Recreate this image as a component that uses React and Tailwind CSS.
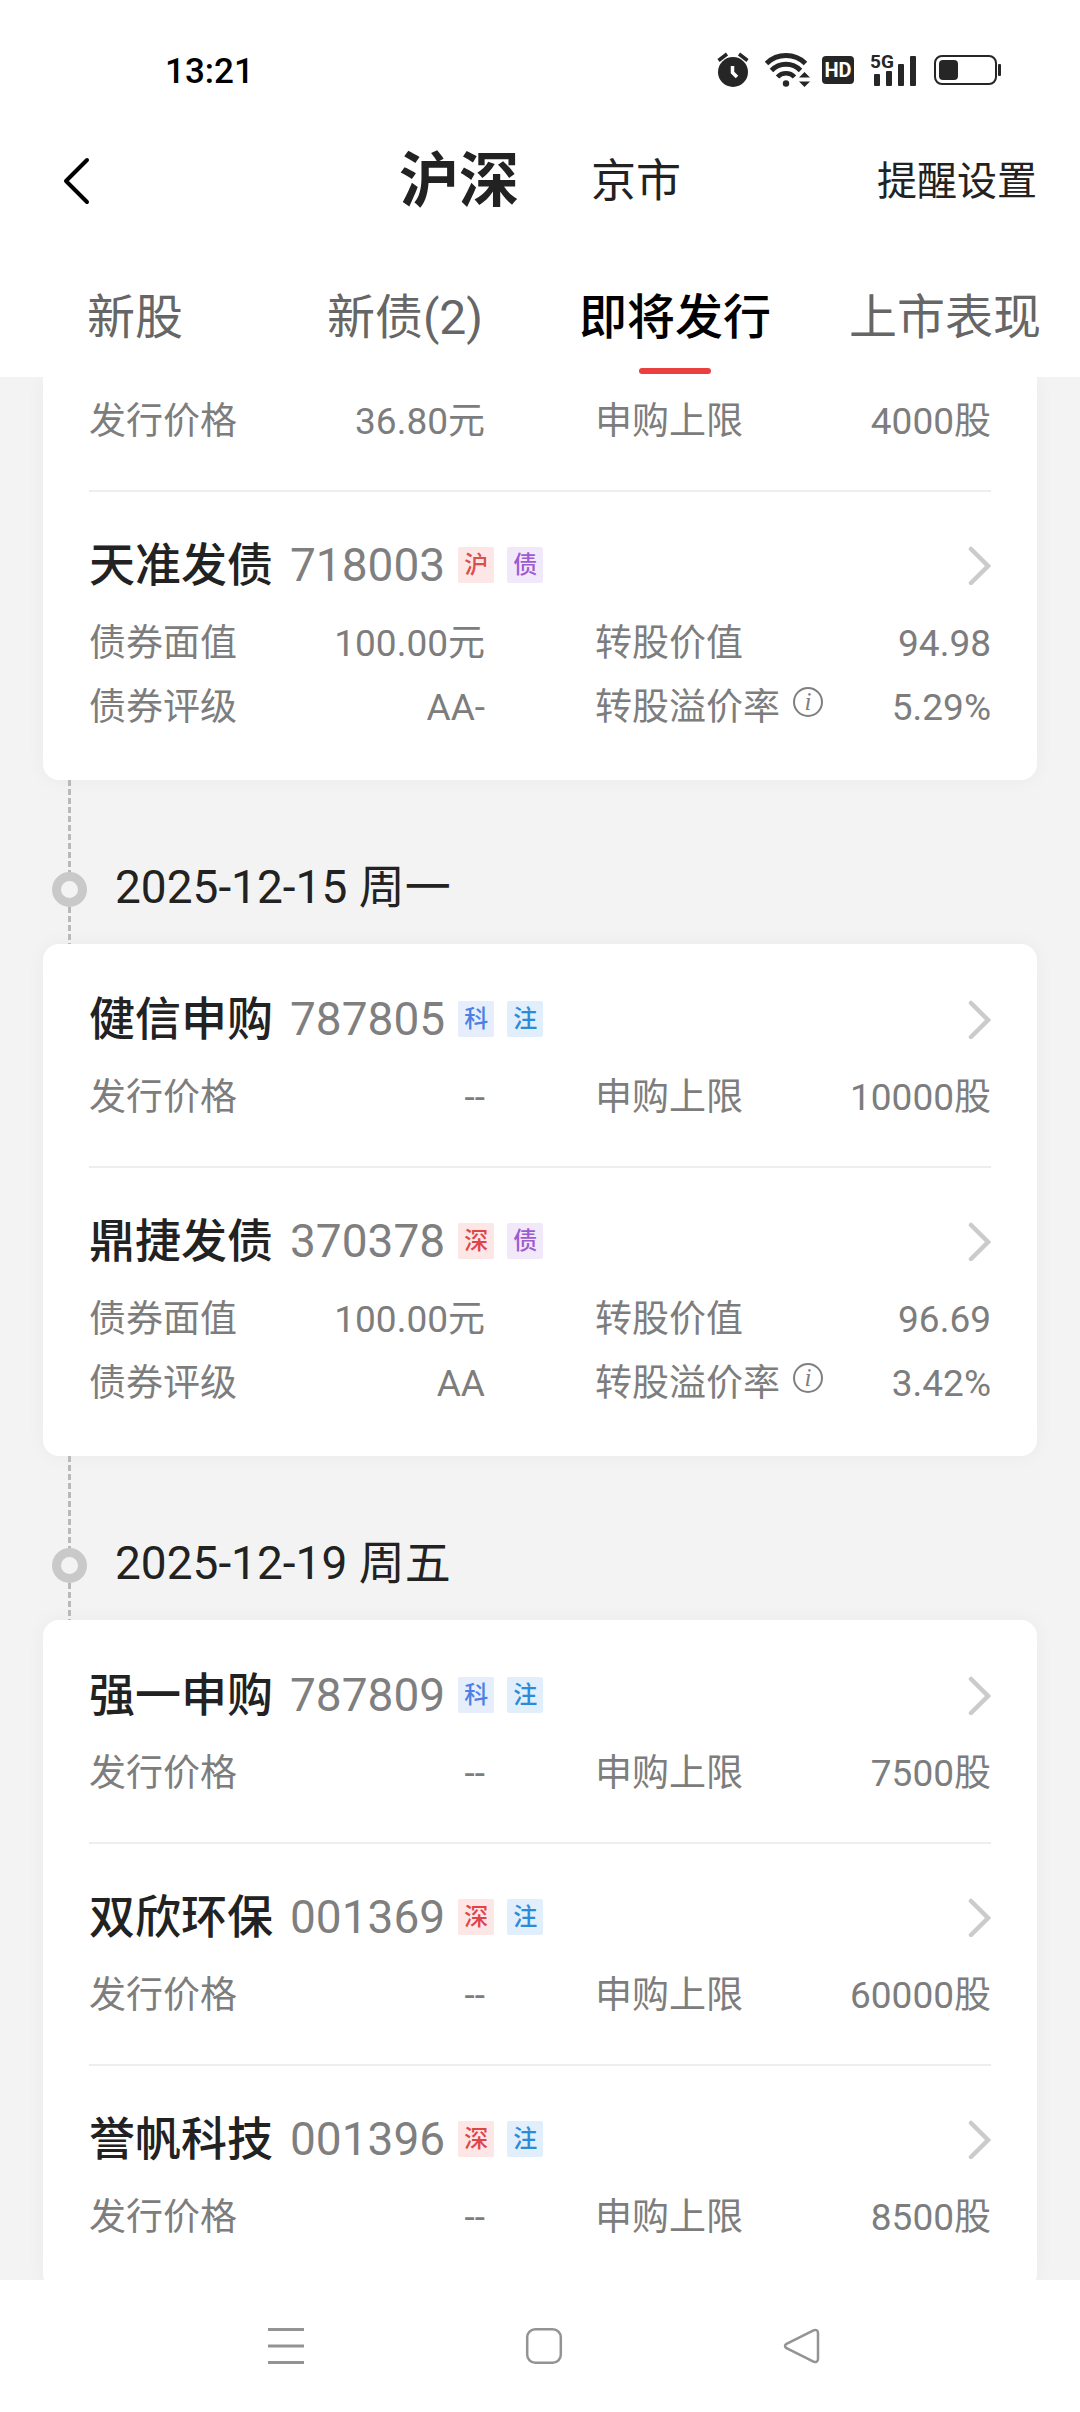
import { useState } from 'react';

const TABS = ['新股', '新债(2)', '即将发行', '上市表现'];

const tagStyle = {
  沪: 'bg-[#fde6e6] text-[#d9504c]',
  深: 'bg-[#fde6e6] text-[#e04545]',
  债: 'bg-[#f1e9fa] text-[#9d5bd2]',
  科: 'bg-[#e6eefc] text-[#4d7fe6]',
  注: 'bg-[#e0effb] text-[#2b8bd9]',
};

const stock = (prix, limite) => [
  { label: '发行价格', value: prix },
  { label: '申购上限', value: limite },
];

const bond = (rating, conv, premium) => [
  { label: '债券面值', value: '100.00元' },
  { label: '转股价值', value: conv },
  { label: '债券评级', value: rating },
  { label: '转股溢价率', value: premium, info: true },
];

const firstGroup = [
  { code: '718003', name: '天准发债', tags: ['沪', '债'], fields: bond('AA-', '94.98', '5.29%') },
];

const groups = [
  {
    date: '2025-12-15 周一',
    items: [
      { code: '787805', name: '健信申购', tags: ['科', '注'], fields: stock('--', '10000股') },
      { code: '370378', name: '鼎捷发债', tags: ['深', '债'], fields: bond('AA', '96.69', '3.42%') },
    ],
  },
  {
    date: '2025-12-19 周五',
    items: [
      { code: '787809', name: '强一申购', tags: ['科', '注'], fields: stock('--', '7500股') },
      { code: '001369', name: '双欣环保', tags: ['深', '注'], fields: stock('--', '60000股') },
      { code: '001396', name: '誉帆科技', tags: ['深', '注'], fields: stock('--', '8500股') },
    ],
  },
];

function StatusIcons() {
  return (
    <div className="flex items-center text-[#262626]">
      {/* Alarm */}
      <svg width="32" height="36" viewBox="0 0 32 36" fill="none">
        <circle cx="16" cy="20" r="15" fill="currentColor" />
        <path d="M1.500 8.500L10 2M30.500 8.500L22 2" stroke="currentColor" strokeWidth="3.500" />
        <path d="M15.500 14V20.500L20 25" stroke="#fff" strokeWidth="3.500" />
      </svg>
      {/* Wifi */}
      <svg className="ml-4" width="46" height="36" viewBox="0 0 46 36" fill="none">
        <path d="M1.500 11.500A28 28 0 0 1 40.500 11.500" stroke="currentColor" strokeWidth="5" />
        <path d="M6.500 18.500A20 20 0 0 1 35.500 18.500" stroke="currentColor" strokeWidth="4.800" />
        <path d="M12.500 25A11.500 11.500 0 0 1 29.500 25" stroke="currentColor" strokeWidth="4.500" />
        <circle cx="21" cy="31.500" r="3.200" fill="currentColor" />
        <path d="M34 25.500L39.500 20L45 25.500ZM34 29.500L39.500 35L45 29.500Z" fill="currentColor" />
      </svg>
      {/* HD */}
      <span className="ml-[11px] flex h-7 w-8 items-center justify-center rounded-[4px] bg-[#262626] text-[20px] leading-none font-bold text-white">
        HD
      </span>
      {/* 5G */}
      <svg className="ml-4" width="48" height="48" viewBox="0 -6 48 48" fill="currentColor">
        <text x="0" y="16" fontSize="19" fontWeight="700" fontFamily="Roboto">5G</text>
        <rect x="4" y="22" width="6" height="12" rx="1" />
        <rect x="16" y="19" width="6" height="15" rx="1" />
        <rect x="28" y="12" width="6" height="22" rx="1" />
        <rect x="40" y="4" width="6" height="30" rx="1" />
      </svg>
      {/* Battery */}
      <svg className="ml-4" width="68" height="36" viewBox="0 0 68 36" fill="none">
        <rect x="1" y="4" width="61" height="28" rx="7" stroke="currentColor" strokeWidth="2" />
        <rect x="5" y="8" width="19" height="20" rx="4" fill="currentColor" />
        <rect x="64" y="12" width="3" height="12" rx="1" fill="currentColor" />
      </svg>
    </div>
  );
}

function Field({ label, value, info }) {
  return (
    <div className="flex h-16 items-center justify-between">
      <dt className="flex items-center">
        {label}
        {info && (
          <button aria-label="说明" className="ml-3 pb-3">
            <svg width="32" height="32" viewBox="0 0 32 32" fill="none">
              <circle cx="16" cy="16" r="14" stroke="#7f7f7f" strokeWidth="2" />
              <text x="16" y="24" textAnchor="middle" fontSize="25" fontStyle="italic" fontFamily="Liberation Serif, serif" fill="#7f7f7f">i</text>
            </svg>
          </button>
        )}
      </dt>
      <dd>{value}</dd>
    </div>
  );
}

function Fields({ fields }) {
  return (
    <dl className="grid grid-cols-2 gap-x-[110px] text-[37px] text-[#7d7d7d]">
      {fields.map((f) => <Field key={f.label} {...f} />)}
    </dl>
  );
}

function Item({ code, name, tags, fields, first }) {
  return (
    <li className={first ? 'pt-[46px] pb-9' : 'border-t-2 border-[#eeeeee] pt-11 pb-9'}>
      <a href="#detail" className="mb-[18px] flex h-[58px] items-center">
        <span className="text-[46px] leading-[58px] font-medium text-[#222222]">{name}</span>
        <span className="ml-[17px] text-[46px] leading-[58px] text-[#7f7f7f]">{code}</span>
        <span className="ml-[13px] flex gap-[13px]">
          {tags.map((t) => (
            <span key={t} className={`flex h-9 w-9 items-center justify-center rounded-[2px] text-[24px] leading-none font-medium ${tagStyle[t]}`}>
              {t}
            </span>
          ))}
        </span>
        <svg className="ml-auto" width="24" height="40" viewBox="0 0 24 40" fill="none">
          <path d="M4 4L21 21L4 38" stroke="#cbcbcb" strokeWidth="4.500" strokeLinecap="round" />
        </svg>
      </a>
      <Fields fields={fields} />
    </li>
  );
}

const dashes = 'w-[3px] bg-[repeating-linear-gradient(#b9b9b9_0_6px,transparent_6px_9px)]';

function DateMark({ date }) {
  return (
    <div className="flex h-[164px] px-[52px]">
      <div className="flex w-[35px] flex-col items-center">
        <div className={`h-[92px] ${dashes}`} />
        <div className="h-[35px] w-[35px] rounded-full border-[9px] border-[#c9c9c9]" />
        <div className={`flex-1 ${dashes}`} />
      </div>
      <h2 className="mt-[78px] ml-7 text-[46px] leading-[58px] text-[#222222]">{date}</h2>
    </div>
  );
}

const card = 'mx-[43px] bg-white px-[46px] pb-1 shadow-[0_0_20px_rgba(0,0,0,0.04)]';

export default function App() {
  const [tab, setTab] = useState('即将发行');

  return (
    <div className="flex h-screen flex-col overflow-hidden bg-white font-[Roboto,'Noto_Sans_CJK_SC',sans-serif]">
      <header className="relative z-10 bg-white">
        <div className="mb-1 flex h-[140px] items-center justify-between pr-[78px] pl-[165px]">
          <time className="pt-1 text-[35px] font-medium text-black">13:21</time>
          <StatusIcons />
        </div>

        <div className="grid h-[76px] grid-cols-[1fr_auto_1fr] items-center px-[43px] text-[#222222]">
          <button aria-label="返回" className="justify-self-start pl-[18px]">
            <svg width="30" height="50" viewBox="0 0 30 50" fill="none">
              <path d="M26 3L5 24L26 45" stroke="#000" strokeWidth="4" strokeLinecap="round" strokeLinejoin="round" />
            </svg>
          </button>
          <div className="flex items-center gap-[72px]">
            <button className="text-[60px] leading-[76px] font-bold">沪深</button>
            <button className="text-[45px] leading-[76px]">京市</button>
          </div>
          <a href="#remind" className="justify-self-end text-[40px]">提醒设置</a>
        </div>

        <nav className="grid grid-cols-4 pt-[68px] pb-[3px]">
          {TABS.map((t) => (
            <button key={t} onClick={() => setTab(t)} className="flex flex-col items-center gap-5 whitespace-nowrap">
              <span className={`text-[48px] leading-[60px] ${t === tab ? 'font-medium text-black' : 'text-[#666666]'}`}>{t}</span>
              <span className={`h-[6px] w-[72px] rounded-full ${t === tab ? 'bg-[#ea4040]' : ''}`} />
            </button>
          ))}
        </nav>
      </header>

      <main className="min-h-0 flex-1 overflow-hidden bg-[#f3f3f3]">
        <ul className={`${card} rounded-b-[16px]`}>
          <li className="pt-[13px] pb-9">
            <Fields fields={stock('36.80元', '4000股')} />
          </li>
          {firstGroup.map((i) => <Item key={i.code} {...i} />)}
        </ul>

        {groups.map((g) => (
          <section key={g.date}>
            <DateMark date={g.date} />
            <ul className={`${card} rounded-[16px]`}>
              {g.items.map((i, n) => <Item key={i.code} {...i} first={n === 0} />)}
            </ul>
          </section>
        ))}
      </main>

      {/* Barre système */}
      <footer className="relative z-10 flex h-[132px] items-center justify-center gap-[220px] bg-white pl-2 text-[#939393]">
        <button aria-label="菜单">
          <svg width="38" height="38" viewBox="0 0 38 38" fill="none" stroke="currentColor" strokeWidth="3">
            <path d="M1 2.500H37M1 19H37M1 35.500H37" />
          </svg>
        </button>
        <button aria-label="主页">
          <svg width="38" height="38" viewBox="0 0 38 38" fill="none" stroke="currentColor" strokeWidth="2.500">
            <rect x="2.200" y="2.200" width="33.600" height="33.600" rx="8" />
          </svg>
        </button>
        <button aria-label="后退">
          <svg width="38" height="38" viewBox="0 0 38 38" fill="none" stroke="currentColor" strokeWidth="2.500" strokeLinejoin="round">
            <path d="M30.500 3.300L3.500 16.800Q0.500 19 3.500 21.200L30.500 34.700C33 35.800 35 34.500 35 32V6C35 3.500 33 2.200 30.500 3.300Z" />
          </svg>
        </button>
      </footer>
    </div>
  );
}
